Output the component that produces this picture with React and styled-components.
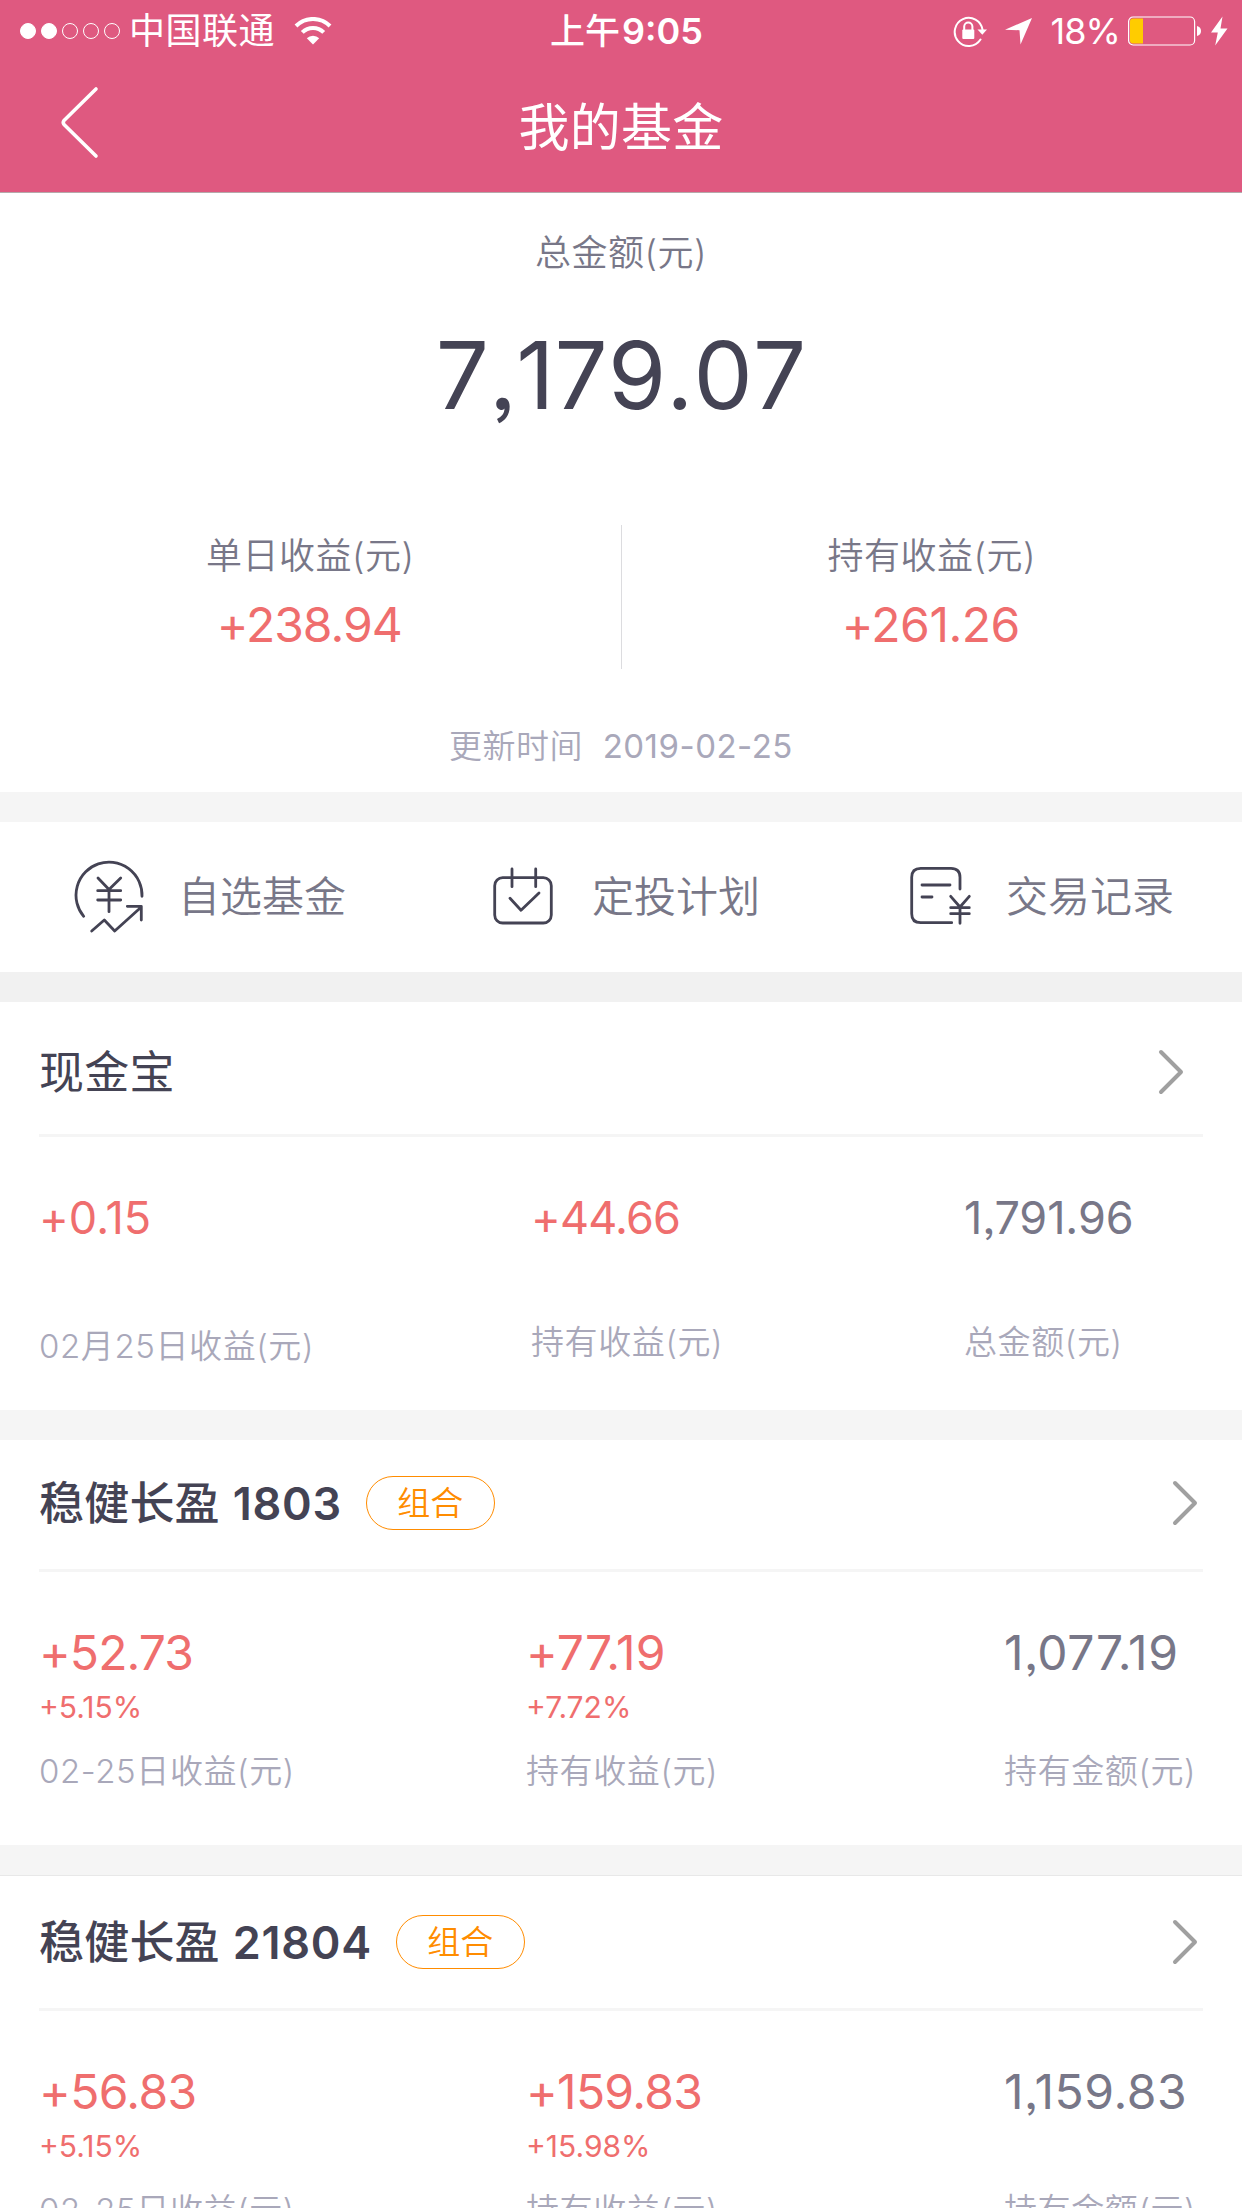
import React from 'react';
import styled, { createGlobalStyle } from 'styled-components';

const GlobalStyle = createGlobalStyle`
  * {
    box-sizing: border-box;
  }
  body {
    margin: 0;
    background: #fff;
    font-family: Inter, "Noto Sans CJK SC", sans-serif;
    font-weight: 400;
    font-feature-settings: "ss03";
  }
`;

const Page = styled.div`
  width: 1242px;
  height: 2208px;
  overflow: hidden;
  display: flex;
  flex-direction: column;
  white-space: nowrap;
`;

const Header = styled.header`
  flex: none;
  height: 193px;
  background: #df5980;
  border-bottom: 1px solid #b5a9ab;
  color: #fff;
`;

const StatusBar = styled.div`
  height: 60px;
  padding: 0 14px 0 20px;
  display: grid;
  grid-template-columns: 1fr auto 1fr;
  font-size: 36px;
  line-height: 62px;
`;

const StatusLeft = styled.div`
  display: flex;
  align-items: center;
`;

const Dots = styled.div`
  display: flex;
  gap: 5px;
  margin-right: 9px;
`;

const Dot = styled.span`
  width: 16px;
  height: 16px;
  border-radius: 50%;
  border: 1px solid #fff;
  background: ${props => props.$on ? '#fff' : 'transparent'};
`;

const Carrier = styled.span`
  letter-spacing: 0.5px;
  margin-right: 19px;
`;

const Clock = styled.div`
  font-weight: 600;
  margin-left: 5px;
`;

const Ampm = styled.span`
  font-weight: 500;
  font-size: 35px;
  margin-right: 2px;
`;

const StatusRight = styled.div`
  display: flex;
  justify-content: flex-end;
  align-items: center;
`;

const Percent = styled.span`
  letter-spacing: -0.9px;
  margin: 0 8px 0 17px;
`;

const Icon = styled.svg`
  display: block;
  flex: none;
  fill: none;
  stroke-linecap: round;
  stroke-linejoin: round;
`;

const WifiIcon = styled(Icon)`
  stroke: #fff;
  stroke-width: 4;
  stroke-linecap: butt;
`;

const ArrowIcon = styled(Icon)`
  margin-left: 16px;
`;

const BoltIcon = styled(Icon)`
  margin-left: 9px;
`;

const NavBar = styled.div`
  height: 132px;
  padding: 0 59px;
  display: grid;
  grid-template-columns: 40px 1fr 40px;
`;

const BackIcon = styled(Icon)`
  margin-top: 25px;
`;

const NavTitle = styled.h1`
  margin: 0;
  text-align: center;
  font-size: 51px;
  font-weight: 400;
  line-height: 135px;
  letter-spacing: 0.3px;
`;

const Gap = styled.div`
  flex: none;
  height: ${props => props.$line ? '31px' : '30px'};
  background: ${props => props.$dark ? '#f1f1f1' : '#f5f5f5'};
  border-bottom: ${props => props.$line ? '1px solid #e8e8e8' : 'none'};
`;

const Summary = styled.section`
  flex: none;
  height: 599px;
  padding-top: 35px;
  text-align: center;
`;

const SummaryLabel = styled.div`
  color: #787788;
  font-size: 36px;
  font-weight: 350;
  line-height: 50px;
  letter-spacing: 0.5px;
`;

const Total = styled.div`
  margin-top: 42px;
  color: #444354;
  font-size: 94px;
  line-height: 110px;
  font-kerning: none;
  letter-spacing: 0.1px;
`;

const Split = styled.div`
  height: 144px;
  margin-top: 95px;
  display: grid;
  grid-template-columns: 1fr 1px 1fr;
`;

const SplitLine = styled.div`
  background: #dcdcdf;
`;

const SplitItem = styled.div`
  padding-top: 6px;
`;

const Updated = styled.div`
  margin-top: 54px;
  color: #a9a8ba;
  font-size: 33px;
  line-height: 46px;
  letter-spacing: 0.5px;
  white-space: pre;
`;

const UpdatedLabel = styled.span`
  font-weight: 350;
`;

const Value = styled.div`
  color: ${props => props.$up ? '#ef6e6e' : '#787788'};
  font-size: ${props => props.$small ? '45px' : '48px'};
  line-height: 60px;
  letter-spacing: ${props => props.$track || 0}px;
`;

const SplitValue = styled(Value)`
  margin: 14px 2px 0 0;
`;

const Actions = styled.nav`
  flex: none;
  height: 150px;
  display: grid;
  grid-template-columns: repeat(3, 414px);
`;

const Action = styled.a`
  display: flex;
  align-items: center;
  padding-left: 72px;
  color: #787788;
  font-size: 42px;
  font-weight: 350;
  line-height: 60px;
`;

const ActionIcon = styled(Icon)`
  stroke: #444354;
  stroke-width: 2.8;
  margin-right: 30px;
`;

const Card = styled.section`
  flex: none;
  height: ${props => props.$height}px;
`;

const CardHead = styled.div`
  height: ${props => props.$tall ? '135px' : '132px'};
  margin: 0 39px;
  border-bottom: 3px solid #f5f5f5;
  display: flex;
  align-items: center;
  padding: ${props => props.$plain ? '7px 18px 0 0' : props.$tall ? '0 4px 0 0' : '0 4px 3px 0'};
`;

const CardTitle = styled.h2`
  margin: 2px 0 0;
  color: #444354;
  font-size: 45px;
  font-weight: ${props => props.$bold ? 500 : 400};
  line-height: 60px;
  letter-spacing: 0.2px;
`;

const Code = styled.span`
  font-weight: 600;
  letter-spacing: 0.7px;
  margin-left: 13px;
`;

const Tag = styled.span`
  width: 129px;
  height: 54px;
  margin-left: 24px;
  border: 1px solid #ff8c00;
  border-radius: 27px;
  color: #ff8c00;
  font-size: 33px;
  font-weight: 350;
  line-height: 53px;
  text-align: center;
`;

const Chevron = styled(Icon)`
  stroke: #a0a0a0;
  stroke-width: 4;
  margin-left: auto;
`;

const Columns = styled.div`
  display: grid;
  grid-template-columns: ${props => props.$plain ? '492px 433px auto' : '487px 478px auto'};
  padding: 51px 0 0 39px;
`;

const Rate = styled.div`
  height: 40px;
  margin-top: 4px;
  color: #ef6e6e;
  font-size: 30px;
  line-height: 40px;
`;

const ColumnLabel = styled.div`
  margin-top: ${props => props.$top}px;
  color: #a9a8ba;
  font-size: 33px;
  font-weight: 350;
  line-height: 46px;
  letter-spacing: 0.6px;
`;

const ChevronIcon = () => (
  <Chevron width='28' height='48' viewBox='0 0 28 48'>
    <path d='M4 4L24 24L4 44' />
  </Chevron>
);

const FundCard = (props) => {
  return (
    <Card $height={405}>
      <CardHead $tall={props.tall}>
        <CardTitle $bold>{props.fund.name}<Code>{props.fund.code}</Code></CardTitle>
        <Tag>组合</Tag>
        <ChevronIcon />
      </CardHead>
      <Columns>
        {props.fund.columns.map(col => (
          <div key={col.label}>
            <Value $up={col.up} $track={col.track}>{col.value}</Value>
            <Rate>{col.rate}</Rate>
            <ColumnLabel $top={21}>{col.label}</ColumnLabel>
          </div>
        ))}
      </Columns>
    </Card>
  )
}

const funds = [
  {
    name: '稳健长盈',
    code: '1803',
    columns: [
      { value: '+52.73', rate: '+5.15%', label: '02-25日收益(元)', up: true, track: -0.9 },
      { value: '+77.19', rate: '+7.72%', label: '持有收益(元)', up: true, track: 0.1 },
      { value: '1,077.19', label: '持有金额(元)', track: 0.6 },
    ],
  },
  {
    name: '稳健长盈',
    code: '21804',
    columns: [
      { value: '+56.83', rate: '+5.15%', label: '02-25日收益(元)', up: true, track: -0.6 },
      { value: '+159.83', rate: '+15.98%', label: '持有收益(元)', up: true, track: -0.7 },
      { value: '1,159.83', label: '持有金额(元)', track: 0.6 },
    ],
  },
];

const App = () => {
  return (
    <Page>
      <GlobalStyle />
      <Header>
        <StatusBar>
          <StatusLeft>
            <Dots>
              <Dot $on /><Dot $on /><Dot /><Dot /><Dot />
            </Dots>
            <Carrier>中国联通</Carrier>
            <WifiIcon width='38' height='28' viewBox='0 0 38 28'>
              <path d='M2 9A24 24 0 0 1 36 9' />
              <path d='M8.3 15.4A15 15 0 0 1 29.7 15.4' />
              <path d='M19 27.5L12.8 21.3A8.8 8.8 0 0 1 25.2 21.3Z' fill='#fff' stroke='none' />
            </WifiIcon>
          </StatusLeft>
          <Clock><Ampm>上午</Ampm>9:05</Clock>
          <StatusRight>
            <Icon width='36' height='32' viewBox='0 0 36 32' stroke='#fff' strokeWidth='2'>
              <path d='M27.5 24.5A14 14 0 1 1 29.6 15' />
              <path d='M24.5 14.5H34L29.3 19.8Z' fill='#fff' stroke='none' />
              <rect x='9.3' y='14.5' width='12' height='9.5' rx='1' fill='#fff' stroke='none' />
              <path d='M11.2 15V11.5A4.1 4.1 0 0 1 19.4 11.5V15' />
            </Icon>
            <ArrowIcon width='28' height='28' viewBox='0 0 28 28'>
              <path d='M27 1L0 12.8L14.5 13.2L15.5 27.5Z' fill='#fff' />
            </ArrowIcon>
            <Percent>18%</Percent>
            <Icon width='74' height='30' viewBox='0 0 74 30'>
              <rect x='0.6' y='1' width='66' height='28' rx='4.5' stroke='#fff' strokeWidth='1.2' />
              <path d='M15 2.5V27.5H5Q2 27.5 2 24.5V5.5Q2 2.5 5 2.5Z' fill='#ffcc00' />
              <path d='M69 10Q73 11 73 15T69 20Z' fill='#fff' />
            </Icon>
            <BoltIcon width='17' height='30' viewBox='0 0 17 30'>
              <path d='M11.5 0.5L0 16.5H6.8L4.2 29.5L16.5 12.5H9.5Z' fill='#fff' />
            </BoltIcon>
          </StatusRight>
        </StatusBar>
        <NavBar>
          <BackIcon width='40' height='76' viewBox='0 0 40 76' stroke='#fff' strokeWidth='3.6'>
            <path d='M37 4L5 35.5Q3.5 37.5 5 39.5L37 71' />
          </BackIcon>
          <NavTitle>我的基金</NavTitle>
        </NavBar>
      </Header>

      <Summary>
        <SummaryLabel>总金额(元)</SummaryLabel>
        <Total>7,179.07</Total>
        <Split>
          <SplitItem>
            <SummaryLabel>单日收益(元)</SummaryLabel>
            <SplitValue $up $track={-1}>+238.94</SplitValue>
          </SplitItem>
          <SplitLine />
          <SplitItem>
            <SummaryLabel>持有收益(元)</SummaryLabel>
            <SplitValue $up $track={-0.5}>+261.26</SplitValue>
          </SplitItem>
        </Split>
        <Updated><UpdatedLabel>更新时间</UpdatedLabel>  2019-02-25</Updated>
      </Summary>
      <Gap />

      <Actions>
        <Action>
          <ActionIcon width='76' height='76' viewBox='0 0 76 76'>
            <path d='M11.7 57.3A33 33 0 1 1 70 37.3' />
            <path d='M26 19L37 30.5L48.7 19M37 30.5V52.7M25.7 31.7H48.7M25.7 41H48.7' />
            <path d='M19.7 72L32.3 61L42.7 72L69.3 48M55.3 47.3H69.3V61' />
          </ActionIcon>
          自选基金
        </Action>
        <Action>
          <ActionIcon width='76' height='76' viewBox='0 0 76 76'>
            <rect x='8.7' y='18.7' width='56.6' height='45.3' rx='8' />
            <path d='M26 10V27.7M49.7 10V27.7M24 39.3L35 51.3L53 34' />
          </ActionIcon>
          定投计划
        </Action>
        <Action>
          <ActionIcon width='76' height='76' viewBox='0 0 76 76'>
            <path d='M60 30V18.3Q60 9.3 51 9.3H20.7Q11.7 9.3 11.7 18.3V54.7Q11.7 63.7 20.7 63.7H51.7' />
            <path d='M22 26H50M22 38H32' />
            <path d='M50.7 37.3L60 48L69.3 37.3M60 48V64.3M50.7 48.7H69.3M50.7 54.7H69.3' />
          </ActionIcon>
          交易记录
        </Action>
      </Actions>
      <Gap $dark />

      <Card $height={408}>
        <CardHead $plain $tall>
          <CardTitle>现金宝</CardTitle>
          <ChevronIcon />
        </CardHead>
        <Columns $plain>
          <div>
            <Value $small $up $track={0.1}>+0.15</Value>
            <ColumnLabel $top={75}>02月25日收益(元)</ColumnLabel>
          </div>
          <div>
            <Value $small $up $track={-0.8}>+44.66</Value>
            <ColumnLabel $top={71}>持有收益(元)</ColumnLabel>
          </div>
          <div>
            <Value $small $track={-0.1}>1,791.96</Value>
            <ColumnLabel $top={71}>总金额(元)</ColumnLabel>
          </div>
        </Columns>
      </Card>
      <Gap />

      <FundCard fund={funds[0]} />
      <Gap $line />
      <FundCard fund={funds[1]} tall />
    </Page>
  )
}

export default App;
